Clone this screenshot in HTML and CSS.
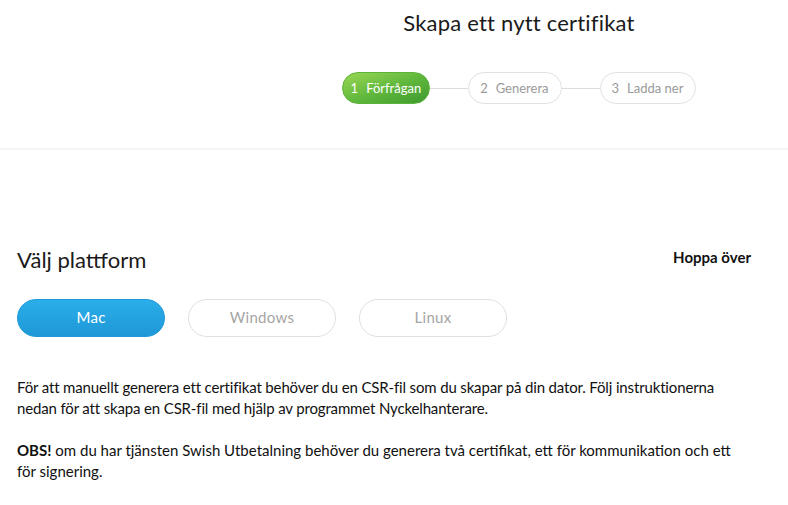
FILE: index.html
```html
<!DOCTYPE html>
<html>
<head>
<meta name="viewport" content="width=device-width, initial-scale=1">
<link rel="stylesheet" href="styles.css">
</head>
<body>
<div class="header">
  <h1 class="title">Skapa ett nytt certifikat</h1>
  <div class="steps">
    <span class="step active"><b>1</b>Förfrågan</span>
    <span class="step-line"></span>
    <span class="step"><b>2</b>Generera</span>
    <span class="step-line"></span>
    <span class="step"><b>3</b>Ladda ner</span>
  </div>
</div>

<div class="content">
  <div class="platform-head">
    <h2 class="platform-title">Välj plattform</h2>
    <a class="skip" href="#">Hoppa över</a>
  </div>
  <div class="platforms">
    <button class="platform selected">Mac</button>
    <button class="platform">Windows</button>
    <button class="platform">Linux</button>
  </div>
  <p class="info">För att manuellt generera ett certifikat behöver du en CSR-fil som du skapar på din dator. Följ instruktionerna nedan för att skapa en CSR-fil med hjälp av programmet Nyckelhanterare.</p>
  <p class="info note"><strong>OBS!</strong> om du har tjänsten Swish Utbetalning behöver du generera två certifikat, ett för kommunikation och ett för signering.</p>
</div>
</body>
</html>
```

FILE: styles.css
```css
body {
  margin: 0;
  background: #fff;
  font-family: Lato, "Open Sans", sans-serif;
  color: #1a1a1a;
}

/* Top area with title and the step indicator */
.header {
  padding: 10px 0 0 250px;
  height: 138px;
  border-bottom: 2px solid #f5f5f5;
  text-align: center;
}

.title {
  margin: 0;
  font-size: 22px;
  font-weight: 400;
  line-height: 26px;
  letter-spacing: 0.2px;
}

.steps {
  display: flex;
  justify-content: center;
  align-items: center;
  margin-top: 36px;
}

.step {
  display: inline-flex;
  align-items: center;
  height: 30px;
  padding: 0 12px 0 11px;
  border: 1px solid #e2e2e2;
  border-radius: 16px;
  font-size: 13px;
  color: #9a9a9a;
  background: #fff;
}

.step b {
  font-weight: 400;
  margin-right: 8px;
}

.step.active {
  padding: 0 8px 0 8px;
  border-color: #5cb33a;
  color: #fff;
  background: linear-gradient(160deg, #9bd655 0%, #62b93d 50%, #3d9a2f 100%);
}

.step-line {
  width: 38px;
  height: 1px;
  background: #dcdcdc;
}

/* Platform chooser */
.content {
  padding: 97px 41px 0 17px;
}

.platform-head {
  display: flex;
  justify-content: space-between;
  align-items: center;
}

.platform-title {
  margin: 0;
  font-size: 22px;
  font-weight: 400;
  line-height: 26px;
}

.skip {
  font-size: 15px;
  font-weight: 700;
  color: #111;
  text-decoration: none;
  margin: -6px -4px 0 0;
}

.platforms {
  display: flex;
  gap: 23px;
  margin-top: 26px;
}

.platform {
  width: 148px;
  height: 38px;
  padding: 0 0 3px;
  border: 1px solid #e0e0e0;
  border-radius: 19px;
  background: #fff;
  font-family: inherit;
  font-size: 15px;
  letter-spacing: 0.3px;
  color: #a5a5a5;
}

.platform.selected {
  border-color: #1f9ad9;
  color: #fff;
  background: linear-gradient(180deg, #2aaeea 0%, #1e98d8 100%);
}

.info {
  margin: 0 0 21px;
  font-size: 15px;
  line-height: 21px;
  letter-spacing: -0.15px;
  color: #111;
}

.info.note {
  letter-spacing: 0;
}

.platforms + .info {
  margin-top: 40px;
}

.info strong {
  font-weight: 700;
}
```
